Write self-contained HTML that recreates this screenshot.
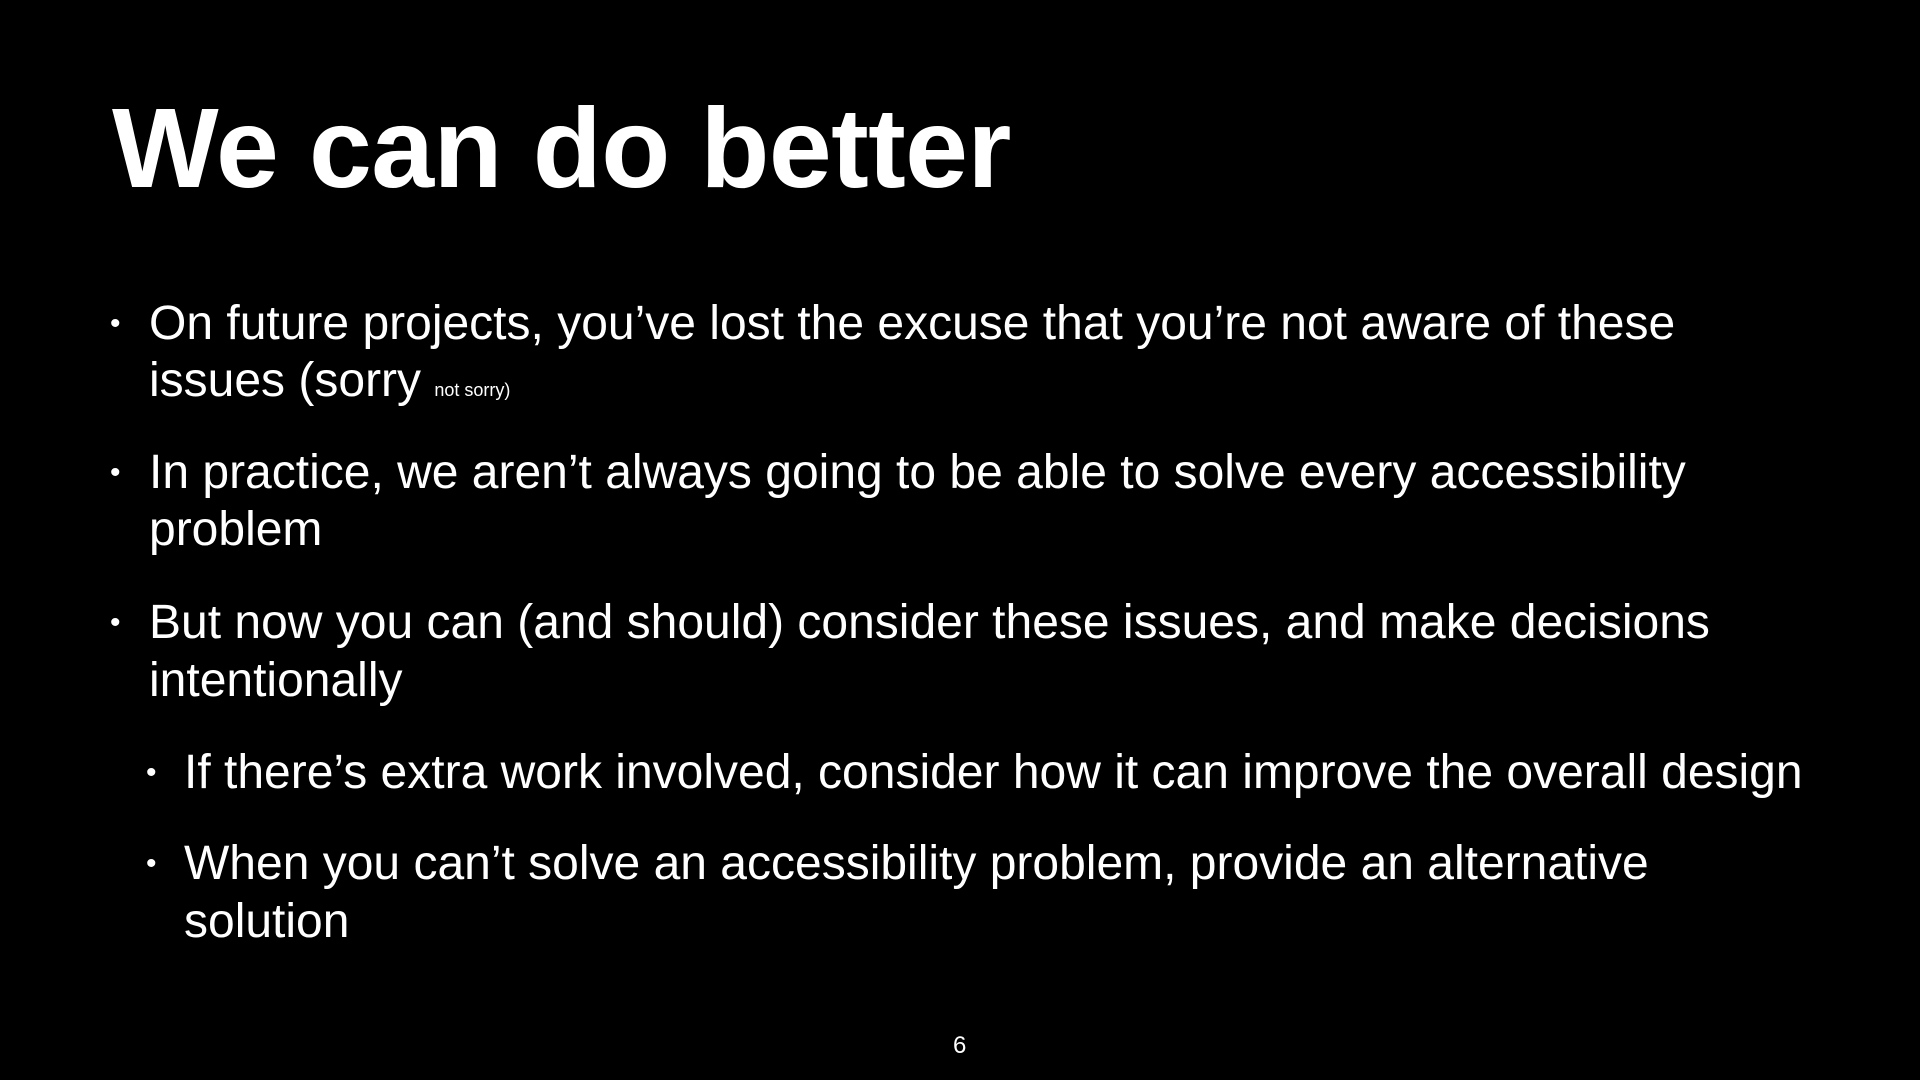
<!DOCTYPE html>
<html><head><meta charset="utf-8"><style>
html,body{margin:0;padding:0;background:#000;}
body{width:1920px;height:1080px;position:relative;overflow:hidden;font-family:"Liberation Sans",Arial,sans-serif;color:#fff;}
.t{position:absolute;left:112px;top:83px;font-size:113px;font-weight:bold;line-height:130px;letter-spacing:-0.6px;white-space:nowrap;}
.l{position:absolute;font-size:48px;line-height:57px;white-space:nowrap;}
.b{position:absolute;font-size:30px;line-height:57px;}
.pn{position:absolute;left:953px;top:1032px;font-size:24px;line-height:28px;}
</style></head><body>
<div class="t">We can do better</div>

<div class="b" style="left:110px;top:295px">•</div>
<div class="l" style="left:149px;top:295px">On future projects, you’ve lost the excuse that you’re not aware of these</div>
<div class="l" style="left:149px;top:352px">issues (sorry <span style="font-size:18px">not sorry)</span></div>

<div class="b" style="left:110px;top:444px">•</div>
<div class="l" style="left:149px;top:444px">In practice, we aren’t always going to be able to solve every accessibility</div>
<div class="l" style="left:149px;top:501px">problem</div>

<div class="b" style="left:110px;top:594px">•</div>
<div class="l" style="left:149px;top:594px">But now you can (and should) consider these issues, and make decisions</div>
<div class="l" style="left:149px;top:652px">intentionally</div>

<div class="b" style="left:146px;top:744px">•</div>
<div class="l" style="left:184px;top:744px">If there’s extra work involved, consider how it can improve the overall design</div>

<div class="b" style="left:146px;top:835px">•</div>
<div class="l" style="left:184px;top:835px">When you can’t solve an accessibility problem, provide an alternative</div>
<div class="l" style="left:184px;top:893px">solution</div>

<div class="pn">6</div>
</body></html>
